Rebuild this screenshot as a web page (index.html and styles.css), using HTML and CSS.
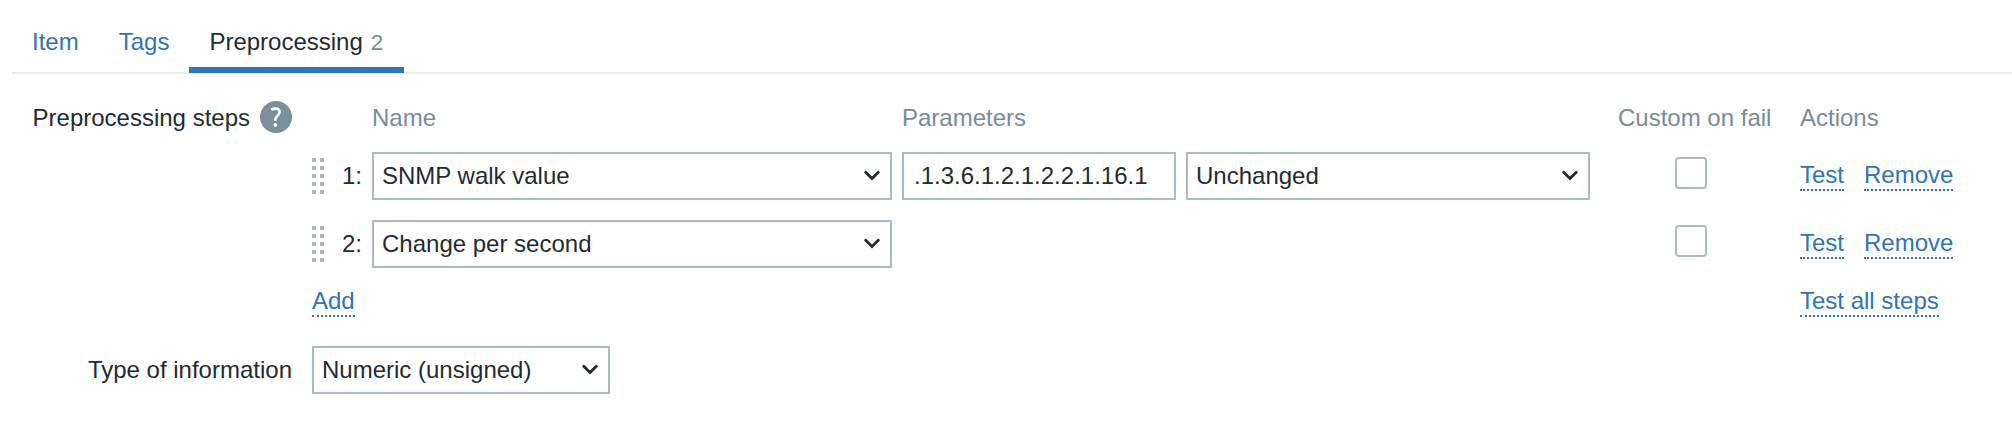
FILE: index.html
```html
<!DOCTYPE html>
<html lang="en">
<head>
<meta charset="utf-8">
<title>Item preprocessing</title>
<link rel="stylesheet" href="styles.css">
</head>
<body>
<svg class="sprite" aria-hidden="true">
  <symbol id="chevron" viewBox="0 0 16 12"><path d="M1.7 2.2 8 8.5l6.3-6.3" fill="none" stroke="currentColor" stroke-width="2.8" stroke-linecap="round"/></symbol>
  <symbol id="drag" viewBox="0 0 12 36"><path d="M0 0h4v4H0zM8 0h4v4H8zM0 8h4v4H0zM8 8h4v4H8zM0 16h4v4H0zM8 16h4v4H8zM0 24h4v4H0zM8 24h4v4H8zM0 32h4v4H0zM8 32h4v4H8z" fill="currentColor"/></symbol>
</svg>
<nav class="tabs">
  <a class="tab">Item</a>
  <a class="tab">Tags</a>
  <a class="tab tab-active">Preprocessing<span class="tab-count">2</span></a>
</nav>
<main class="form">
  <div class="form-label">
    <span>Preprocessing steps</span>
    <svg class="help" viewBox="0 0 32 32"><circle cx="16" cy="16" r="16" fill="#7b8f9c"/><path d="M11.2 8.7c1.4-.7 2.9-1.1 4.3-1.1 2.6 0 4.1 1.4 4.1 3.5 0 3.7-4.3 3.9-4.3 7.4v1.3" fill="none" stroke="#fff" stroke-width="2.6"/><circle cx="15.3" cy="23.8" r="1.9" fill="#fff"/></svg>
  </div>
  <div class="steps">
    <div class="steps-row steps-head">
      <span class="head-name">Name</span><span>Parameters</span><span class="head-fail">Custom on fail</span><span class="head-actions">Actions</span>
    </div>
    <div class="steps-row">
      <div class="order"><svg class="drag"><use href="#drag"/></svg><span>1:</span></div>
      <div class="select"><span>SNMP walk value</span><svg class="chevron"><use href="#chevron"/></svg></div>
      <div class="params">
        <input class="input" type="text" value=".1.3.6.1.2.1.2.2.1.16.1">
        <div class="select"><span>Unchanged</span><svg class="chevron"><use href="#chevron"/></svg></div>
      </div>
      <span class="checkbox"></span>
      <div class="actions"><a class="link">Test</a><a class="link">Remove</a></div>
    </div>
    <div class="steps-row">
      <div class="order"><svg class="drag"><use href="#drag"/></svg><span>2:</span></div>
      <div class="select"><span>Change per second</span><svg class="chevron"><use href="#chevron"/></svg></div>
      <div class="params"></div>
      <span class="checkbox"></span>
      <div class="actions"><a class="link">Test</a><a class="link">Remove</a></div>
    </div>
    <div class="steps-row steps-foot">
      <a class="link">Add</a>
      <a class="link foot-test">Test all steps</a>
    </div>
  </div>
  <div class="form-label label-type">Type of information</div>
  <div class="select select-type"><span>Numeric (unsigned)</span><svg class="chevron"><use href="#chevron"/></svg></div>
</main>
</body>
</html>
```
FILE: styles.css
```css
* { box-sizing: border-box; }
body {
  margin: 0;
  padding: 14px 0 0 12px;
  background: #fff;
  color: #1f2c33;
  font: 24px/28px "Liberation Sans", Arial, sans-serif;
  overflow: hidden;
}
svg { display: block; flex: none; }
.sprite { display: none; }

.tabs {
  display: flex;
  height: 60px;
  border-bottom: 2px solid #ebebeb;
}
.tab {
  height: 59px;
  padding: 14px 20px 0;
  color: #2f74b7;
}
.tab-active {
  width: 215px;
  border-bottom: 6px solid #2f74b7;
  color: #1f2c33;
  white-space: nowrap;
}
.tab-count {
  margin-left: 8px;
  color: #768d99;
  font-size: 22.5px;
}

.form {
  display: grid;
  grid-template-columns: 280px 1700px;
  column-gap: 20px;
}
.form-label {
  display: flex;
  justify-content: flex-end;
  align-items: flex-start;
  gap: 10px;
  padding-top: 30px;
  white-space: nowrap;
}
.help { width: 32px; height: 32px; margin-top: -3px; }

.steps { padding-top: 30px; }
.steps-row {
  display: grid;
  grid-template-columns: 50px 520px 688px 153px auto;
  column-gap: 10px;
  height: 48px;
  margin-bottom: 20px;
}
.steps-head { color: #768d99; margin-bottom: 0; }
.head-name { grid-column: 2; }
.head-fail, .checkbox { margin-left: 18px; white-space: nowrap; }
.head-actions, .actions, .foot-test { margin-left: 37px; }

.order {
  display: flex;
  align-items: center;
  justify-content: space-between;
}
.drag { width: 12px; height: 36px; color: #acbbc2; }

.select, .input {
  height: 48px;
  border: 2px solid #acbbc2;
  background: #fff;
  color: inherit;
  font: inherit;
}
.select {
  display: flex;
  align-items: center;
  justify-content: space-between;
  padding: 0 10px 0 8px;
}
.input { width: 274px; padding: 0 10px; outline: none; }
.chevron { width: 16px; height: 12px; }
.params { display: flex; gap: 10px; }
.params .select { flex: 1; }

.checkbox {
  width: 32px;
  height: 32px;
  margin: 5px 0 0 75px;
  border: 2px solid #acbbc2;
  border-radius: 4px;
}
.actions { display: flex; align-items: flex-start; gap: 20px; padding-top: 9px; }
.link {
  height: 30px;
  border-bottom: 2px dotted #2f74b7;
  color: #2f74b7;
  white-space: nowrap;
}
.steps-foot { height: 30px; margin: -1px 0 0; }
.steps-foot .link { justify-self: start; }
.foot-test { grid-column: 5; }

.label-type { padding-top: 39px; }
.select-type { width: 298px; margin-top: 29px; }
```
